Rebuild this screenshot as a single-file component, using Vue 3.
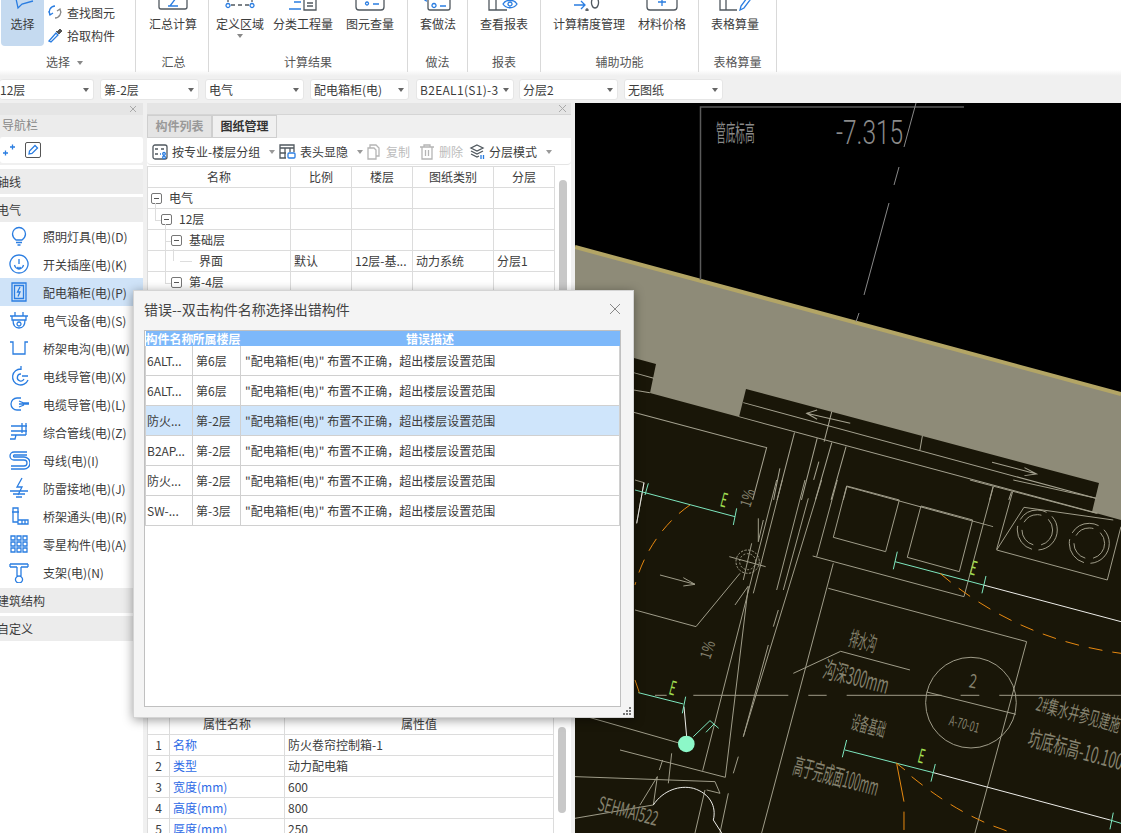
<template>
  <div class="app">
    <!-- ribbon -->
    <div class="ribbon">
      <div class="group" style="width: 136px">
        <div class="btns">
          <div class="select-btn">
            <svg class="clip-icon" width="26" height="10" viewBox="0 0 26 10"><path d="M5 -6 L8 8 L12 4 L23 1" class="ic-blue" /></svg>
            <span>选择</span>
          </div>
          <div class="side-btns">
            <div class="side-btn">
              <svg width="16" height="16" viewBox="0 0 16 16"><path d="M8 2a6 6 0 0 0-5 9" class="ic-blue" /><path d="M2 7l1 4 3-2" class="ic-blue" /><path d="M8 14a6 6 0 0 0 5-9M14 9l-1-4-3 2" class="ic-gray" /></svg>
              <span>查找图元</span>
            </div>
            <div class="side-btn">
              <svg width="16" height="16" viewBox="0 0 16 16"><path d="M2 14l7-8 2 2-7 7z" class="ic-blue" /><path d="M9 4l3 3M10 5l3-3 2 2-3 3z" fill="#555" stroke="#555" /></svg>
              <span>拾取构件</span>
            </div>
          </div>
        </div>
        <div class="group-label first-label">选择<i class="tri lbl-tri"></i></div>
      </div>
      <div v-for="g in ribbonGroups" :key="g.label" class="group" :style="{ width: g.width + 'px' }">
        <div class="btns" :style="{ paddingLeft: g.pad + 'px' }">
          <div v-for="b in g.btns" :key="b.label" class="big-btn" :style="{ width: b.w + 'px', marginRight: b.gap + 'px' }">
            <svg class="clip-icon" width="34" height="11" viewBox="0 0 34 11">
              <path v-for="p in b.gray" :key="p" :d="p" class="ic-dark" />
              <path v-for="p in b.blue" :key="p" :d="p" class="ic-blue" />
            </svg>
            <span>{{ b.label }}</span>
            <i v-if="b.more" class="tri more-tri"></i>
          </div>
        </div>
        <div class="group-label">{{ g.label }}</div>
      </div>
    </div>

    <!-- combo row -->
    <div class="combo-row">
      <div v-for="(c, i) in combos" :key="c" class="combo" :class="{ first: i === 0 }">
        <span>{{ c }}</span><i class="tri"></i>
      </div>
    </div>

    <div class="body">
      <!-- navigation -->
      <div class="nav">
        <div class="nav-close"><svg width="8" height="8" viewBox="0 0 8 8"><path d="M1 1l6 6M7 1L1 7" stroke="#aaa" fill="none" /></svg></div>
        <div class="nav-title">导航栏</div>
        <div class="nav-tools">
          <svg width="14" height="14" viewBox="0 0 14 14"><path d="M1 10h5M3.500 7.500v5M8 4h5M10.500 1.500v5" class="ic-blue" /></svg>
          <span class="pen-box"><svg width="12" height="12" viewBox="0 0 12 12"><path d="M2 10l.5-3L8 1.500 10.500 4 5 9.500z" class="ic-blue" /></svg></span>
        </div>
        <div class="nav-list">
          <div class="nav-head">轴线</div>
          <div class="nav-head">电气</div>
          <div v-for="(item, i) in navItems" :key="item.label" class="nav-item" :class="{ on: i === 2 }">
            <svg width="22" height="22" viewBox="0 0 22 22">
              <path v-for="p in item.paths" :key="p" :d="p" class="ic-blue" />
            </svg>
            <span>{{ item.label }}</span>
          </div>
          <div class="nav-head after">建筑结构</div>
          <div class="nav-head">自定义</div>
        </div>
      </div>

      <!-- drawing panel -->
      <div class="panel">
        <div class="panel-close"><svg width="9" height="9" viewBox="0 0 9 9"><path d="M1 1l7 7M8 1L1 8" stroke="#aaa" fill="none" /></svg></div>
        <div class="tabs">
          <div class="tab">构件列表</div>
          <div class="tab active">图纸管理</div>
        </div>
        <div class="tools">
          <div class="tool" style="width: 127px">
            <svg width="16" height="16" viewBox="0 0 16 16"><rect x="1" y="1" width="14" height="14" rx="2" class="ic-dark" /><path d="M3 5h3M9 5h3M3 10h3" class="ic-dark" /><path d="M8 10h1M12 8.500a1.300 1.300 0 1 0 .01 0M12 12a1.300 1.300 0 1 0 .01 0" class="ic-blue" /></svg>
            <span>按专业-楼层分组</span><i class="tri"></i>
          </div>
          <div class="tool" style="width: 87px">
            <svg width="17" height="17" viewBox="0 0 17 17"><path d="M1 2h14v3H1zM1 5v10h6M6 5v10M1 10h6M11 5v4M15 5v4" class="ic-dark" /><rect x="9" y="10" width="7" height="5" rx="1" class="ic-blue" /></svg>
            <span>表头显隐</span><i class="tri"></i>
          </div>
          <div class="tool off" style="width: 53px">
            <svg width="16" height="16" viewBox="0 0 16 16"><path d="M4 4V1h6l3 3v8h-3M2 4h6l2 2v9H2z" class="ic-off" /></svg>
            <span>复制</span>
          </div>
          <div class="tool off" style="width: 50px">
            <svg width="16" height="16" viewBox="0 0 16 16"><path d="M1 3h14M5 3V1h6v2M3 3v12h10V3M6.500 6v6M9.500 6v6" class="ic-off" /></svg>
            <span>删除</span>
          </div>
          <div class="tool">
            <svg width="16" height="16" viewBox="0 0 16 16"><path d="M8 1l6 3-6 3-6-3zM2 7l6 3 6-3M2 10l6 3 2-1" class="ic-dark" /><path d="M12 11v4M14.500 11v4" class="ic-blue" /></svg>
            <span>分层模式</span><i class="tri"></i>
          </div>
        </div>
        <div class="grid-wrap">
          <table class="grid">
            <colgroup><col style="width: 143px" /><col style="width: 61px" /><col style="width: 61px" /><col style="width: 81px" /><col style="width: 61px" /></colgroup>
            <thead>
              <tr><th>名称</th><th>比例</th><th>楼层</th><th>图纸类别</th><th>分层</th></tr>
            </thead>
            <tbody>
              <tr v-for="r in drawingRows" :key="r.name">
                <td class="tree-cell">
                  <div class="tree" :style="{ paddingLeft: r.indent + 'px' }">
                    <span v-if="r.box" class="box"></span>
                    <span v-else class="leaf"></span>
                    <span>{{ r.name }}</span>
                  </div>
                </td>
                <td>{{ r.scale }}</td><td>{{ r.floor }}</td><td>{{ r.kind }}</td><td>{{ r.layer }}</td>
              </tr>
            </tbody>
          </table>
          <div class="track"><div class="thumb"></div></div>
        </div>
        <div class="props">
          <table class="grid">
            <colgroup><col style="width: 22px" /><col style="width: 115px" /><col style="width: 269px" /></colgroup>
            <thead><tr class="prop-head"><th></th><th>属性名称</th><th>属性值</th></tr></thead>
            <tbody>
              <tr v-for="(p, i) in props" :key="p[0]">
                <td class="num">{{ i + 1 }}</td><td class="key">{{ p[0] }}</td><td>{{ p[1] }}</td>
              </tr>
            </tbody>
          </table>
          <div class="track prop-track"><div class="thumb"></div></div>
        </div>
      </div>

      <!-- CAD canvas -->
      <svg class="cad" width="546" height="730" viewBox="575 103 546 730">
        <rect x="575" y="103" width="546" height="730" fill="#000" />
        <path d="M575 247L1121 394V833H575z" fill="#8e8b78" />
        <path d="M575 247L1121 394" stroke="#b3a565" stroke-width="4" fill="none" />
        <path d="M575 342L656 364L650 393L739 417L746 389L1099 483L1092 512L1121 520V833H575z" fill="#191608" />
        <path d="M700.500 280V107H964" stroke="#5a5a5a" stroke-width="1.500" fill="none" />
        <path d="M916 103L904 147M899 167L894 185M889 203L864 295M859 313L856 322" stroke="#888" fill="none" />
        <text class="cad-text" transform="translate(716 141) scale(.42 1)" font-size="23" fill="#8a8a8a">管底标高</text>
        <text class="cad-num" transform="translate(836 144) scale(.72 1)" font-size="34" fill="#8a8a8a">-7.315</text>

        <g transform="translate(575 100) scale(.3484 .3333)" fill="none" stroke="#a5a290" stroke-width="3">
          <path :d="upperLines" />
        </g>
        <g transform="translate(620 480) scale(.3333)" fill="none" stroke-width="3">
          <path :d="wallLines" stroke="#a09d8a" />
          <path :d="whiteLines" stroke="#eeeeea" />
          <path :d="tealLines" stroke="#7de8c0" />
          <path :d="orangeLines" stroke="#e88a10" stroke-dasharray="42 30" />
          <path d="M45 600L58 638M830 850L852 965M852 995V1050M830 850L855 870" stroke="#e88a10" />
          <circle cx="383" cy="245" r="35" stroke="#a09d8a" stroke-dasharray="7 4" />
          <circle cx="383" cy="245" r="24" stroke="#a09d8a" stroke-dasharray="6 5" />
          <circle cx="1252" cy="150" r="60" stroke="#a09d8a" stroke-dasharray="90 20" />
          <circle cx="1252" cy="150" r="46" stroke="#a09d8a" stroke-dasharray="60 24" />
          <circle cx="1408" cy="190" r="60" stroke="#a09d8a" stroke-dasharray="90 20" />
          <circle cx="1408" cy="190" r="46" stroke="#a09d8a" stroke-dasharray="60 24" />
          <circle cx="1053" cy="668" r="136" stroke="#a09d8a" />
          <circle cx="199" cy="792" r="25" fill="#8cf8c8" />
          <g class="cad-text" fill="#85826f" stroke="none">
            <text transform="translate(683 495) rotate(15) scale(.45 1)" font-size="62">排水沟</text>
            <text transform="translate(605 590) rotate(15) scale(.52 1)" font-size="70">沟深300mm</text>
            <text transform="translate(690 745) rotate(15) scale(.45 1)" font-size="58">设备基础</text>
            <text transform="translate(515 880) rotate(15) scale(.44 1)" font-size="70">高于完成面100mm</text>
            <text transform="translate(1245 690) rotate(15) scale(.55 1)" font-size="58">2#集水井参见建施</text>
            <text transform="translate(1220 795) rotate(15) scale(.6 1)" font-size="66">坑底标高-10.100</text>
            <text transform="translate(1045 622) rotate(10) scale(.7 1)" font-size="58">2</text>
            <text transform="translate(985 735) rotate(15) scale(.62 1)" font-size="42">A-70-01</text>
            <text transform="translate(270 540) rotate(-72) scale(.8 1)" font-size="46">1%</text>
            <text transform="translate(390 85) rotate(-72) scale(.8 1)" font-size="46">1%</text>
            <text transform="translate(-70 990) rotate(15) scale(.58 1)" font-size="60">SEHMAI522</text>
          </g>
          <g class="cad-text" fill="#9fdc50" stroke="none" font-size="58">
            <text transform="translate(298 78) rotate(15) scale(.55 1)">E</text>
            <text transform="translate(144 642) rotate(15) scale(.55 1)">E</text>
            <text transform="translate(1046 282) rotate(15) scale(.55 1)">E</text>
            <text transform="translate(890 846) rotate(15) scale(.55 1)">E</text>
          </g>
        </g>
      </svg>
    </div>

    <!-- error dialog -->
    <div class="dialog">
      <div class="dialog-title">
        <span>错误--双击构件名称选择出错构件</span>
        <svg width="12" height="12" viewBox="0 0 12 12"><path d="M1 1l10 10M11 1L1 11" stroke="#888" fill="none" /></svg>
      </div>
      <div class="err-box">
        <table class="err">
          <colgroup><col style="width: 47px" /><col style="width: 48px" /><col /></colgroup>
          <thead><tr><th>构件名称</th><th>所属楼层</th><th>错误描述</th></tr></thead>
          <tbody>
            <tr v-for="(e, i) in errors" :key="i" :class="{ sel: i === 2 }">
              <td>{{ e[0] }}</td><td>{{ e[1] }}</td><td>"配电箱柜(电)" 布置不正确，超出楼层设置范围</td>
            </tr>
          </tbody>
        </table>
      </div>
      <svg class="grip" width="9" height="9" viewBox="0 0 9 9"><path d="M7 1h2v2H7zM4 4h2v2H4zM7 4h2v2H7zM1 7h2v2H1zM4 7h2v2H4zM7 7h2v2H7z" fill="#777" /></svg>
    </div>
  </div>
</template>

<script setup>
const ribbonGroups = [
  { label: '汇总', width: 73, pad: 12, btns: [
    { label: '汇总计算', w: 50, gray: ['M3 -4V7a2 2 0 0 0 2 2h24a2 2 0 0 0 2-2V-4'], blue: ['M12 6h10M20 -2L14 6'] }
  ] },
  { label: '计算结果', width: 199, pad: 7, btns: [
    { label: '定义区域', w: 48, gap: 9, more: true, gray: ['M8 5h4M15 5h4M22 5h4M5 -3v5M29 -3v5'], blue: ['M5 3.500a2 2 0 1 0 .01 0M29 3.500a2 2 0 1 0 .01 0'] },
    { label: '分类工程量', w: 60, gap: 13, gray: ['M18 -3h12V10H18zM21 3h6M21 6h6'], blue: ['M3 9h12M8 2h7'] },
    { label: '图元查量', w: 48, gray: ['M3 -3V7a3 3 0 0 0 3 3h22a3 3 0 0 0 3-3V-3'], blue: ['M14 2a1.500 1.500 0 1 0 .01 0M20 4h6'] }
  ] },
  { label: '做法', width: 60, pad: 11, btns: [
    { label: '套做法', w: 38, gray: ['M7 -2V8a2 2 0 0 0 2 2h18a2 2 0 0 0 2-2V-2'], blue: ['M13 3.500a2 2 0 1 0 .01 0M19 6h6M3 -2a3 3 0 0 0 3 3'] }
  ] },
  { label: '报表', width: 73, pad: 12, btns: [
    { label: '查看报表', w: 48, gray: ['M2 -3V10H20M9 -3V10'], blue: ['M16 4c3-5 11-5 14 0-3 5-11 5-14 0zM23 2a2 2 0 1 0 .01 0'] }
  ] },
  { label: '辅助功能', width: 158, pad: 12, btns: [
    { label: '计算精度管理', w: 72, gap: 13, blue: ['M2 5h11M9 1l4 4-4 4'], gray: ['M15 9a1 1 0 1 0 .01 0M23 -3a3.500 5.500 0 1 0 .01 0'] },
    { label: '材料价格', w: 48, gray: ['M2 -3V7a3 3 0 0 0 3 3h24a3 3 0 0 0 3-3V-3'], blue: ['M17 -2V6M13 2h8'] }
  ] },
  { label: '表格算量', width: 78, pad: 12, btns: [
    { label: '表格算量', w: 48, gray: ['M2 -3V10H19M8 -3V10'], blue: ['M22 10l1-4 6-8 3 2-6 8z'] }
  ] }
]

const combos = ['12层', '第-2层', '电气', '配电箱柜(电)', 'B2EAL1(S1)-3', '分层2', '无图纸']

const navItems = [
  { label: '照明灯具(电)(D)', paths: ['M8 15C5.500 13 4.500 11 4.500 9a6.500 6.500 0 0 1 13 0c0 2-1 4-3.500 6zM8 17.500h6M9.500 20h3'] },
  { label: '开关插座(电)(K)', paths: ['M11 2a9 9 0 1 0 .01 0M11 6v5M6.500 12c.5 2 2.500 4 4.500 4s4-2 4.500-4M9.500 14l1.500 2 1.500-2'] },
  { label: '配电箱柜(电)(P)', paths: ['M4 2h14v18H4zM6.500 4.500h9v13h-9zM12 6l-2.500 5H12l-2 4.500'] },
  { label: '电气设备(电)(S)', paths: ['M2 7h18M4 7v4h14V7M5 11c0 6 3 8 6 8s6-2 6-8M7 7V3M15 7V3M11 13a2 2 0 1 0 .01 0'] },
  { label: '桥架电沟(电)(W)', paths: ['M2 5h3v12h12V5h3M5 17h12'] },
  { label: '电线导管(电)(X)', paths: ['M13 4a8 8 0 1 0 7 11M13 9a3.500 3.500 0 1 0 3 5M20 11h-6M13 1v4'] },
  { label: '电缆导管(电)(L)', paths: ['M13 5H9a6 6 0 1 0 0 12h4M11 8l5 2h5M11 11h10M11 14l5-2'] },
  { label: '综合管线(电)(Z)', paths: ['M3 5h16M3 10h16M14 2v10M18 2v12M2 18h5l1-4h10M3 14h5'] },
  { label: '母线(电)(I)', paths: ['M19 3H6a4 4 0 0 0 0 8h10a3 3 0 0 1 0 6H3M19 6H6a1.200 1.200 0 0 0 0 2h10a6 6 0 0 1 0 12H3'] },
  { label: '防雷接地(电)(J)', paths: ['M14 1l-5 9h5l-4 8M2 14h18M5 17h12M8 20h6'] },
  { label: '桥架通头(电)(R)', paths: ['M5 3h5v14H5zM4 7h7M10 15h10v4H10zM14 15v4M17 15v4'] },
  { label: '零星构件(电)(A)', paths: ['M3 3h4v4H3zM9 3h4v4H9zM15 3h4v4h-4zM3 9h4v4H3zM9 9h4v4H9zM15 9h4v4h-4zM3 15h4v4H3zM9 15h4v4H9zM15 15h4v4h-4z'] },
  { label: '支架(电)(N)', paths: ['M2 3h18M2 3v3M20 3v3M2 6h7M20 6h-7M9 6v9M13 6v9M11 15a3.500 3.500 0 1 0 .01 0'] }
]

const drawingRows = [
  { name: '电气', indent: 3, box: true },
  { name: '12层', indent: 13, box: true },
  { name: '基础层', indent: 23, box: true },
  { name: '界面', indent: 33, scale: '默认', floor: '12层-基...', kind: '动力系统', layer: '分层1' },
  { name: '第-4层', indent: 23, box: true }
]

const props = [
  ['名称', '防火卷帘控制箱-1'],
  ['类型', '动力配电箱'],
  ['宽度(mm)', '600'],
  ['高度(mm)', '800'],
  ['厚度(mm)', '250']
]

const errors = [
  ['6ALT...', '第6层'],
  ['6ALT...', '第6层'],
  ['防火...', '第-2层'],
  ['B2AP...', '第-2层'],
  ['防火...', '第-2层'],
  ['SW-...', '第-3层']
]

const upperLines = [
  'M168 818L226 835M168 870L215 878M168 937L550 1043L510 1200',
  'M483 908L1495 1195M470 950L1500 1240',
  'M790 970L665 940M695 930L665 940L695 958',
  'M1197 1087L1325 1122M1290 1103L1325 1122L1290 1127',
  'M737 935L715 1025M997 1008L990 1050',
  'M630 998L580 1200M695 1015L650 1200M737 1028L690 1200M778 1040L735 1200',
  'M780 1160L1200 1280M780 1160L770 1200M1200 1160L1190 1200M1253 1175L1245 1200',
  'M588 1105L570 1200M700 1085L685 1140'
].join(' ')

const wallLines = [
  // road edges
  'M470 0L248 872M487 0L400 340M555 0L470 330M565 55L490 330M475 390L460 440M445 495L370 770M355 830L340 880',
  'M605 0L370 770M652 0L590 230M640 250L425 1059',
  'M0 810L316 892M-135 700L180 790M316 892L385 320M385 318L345 375',
  'M45 390L228 440L360 280M45 0L72 8L50 130',
  'M120 285L225 313M190 293L225 313L190 318',
  'M415 115L415 185L430 120',
  // rooms and equipment
  'M680 18L838 60L797 215L640 172Z M903 78L1058 120L1018 275L862 232Z',
  'M578 228L1032 350M1120 20L1032 350M1178 35L1130 208',
  'M1212 82L1130 210L1462 300L1503 140M1212 82L1480 120',
  'M1050 0L1430 100M1180 0L1430 55',
  'M625 325L1220 485L1065 1059',
  'M520 580L662 514L870 570M920 636L1188 703',
  // axis
  'M105 646H140M220 646H505M565 646H620M680 646H965M1022 646H1078M1138 646H1503',
  // valve
  'M328 230L437 260M395 190L370 300',
  // bottom left
  'M-135 890L285 905M285 905L300 940M255 930L225 1059M300 940L260 930M325 940L300 1059',
  'M-135 1015L100 975L112 890M112 890L60 975',
  'M155 820L145 910M128 840L118 870'
].join(' ')

const whiteLines = [
  'M1090 315L1503 425M940 878L1470 1020',
  'M192 680L200 770M72 8L50 130',
  'M100 975C130 930 180 915 220 925C270 940 290 980 280 1020L305 1059'
].join(' ')

const tealLines = [
  'M45 30L345 110M85 10L75 45M350 85L340 135',
  'M55 638L190 672M197 650L187 700',
  'M825 245L1090 315M832 215L820 268M1098 288L1086 340',
  'M675 810L940 878M680 780L667 832M946 852L933 905',
  'M1470 1020L1503 1030M1480 998L1470 1048',
  'M220 770L270 722L296 745M258 757L282 732'
].join(' ')

const orangeLines = [
  'M210 75C130 130 70 220 45 315',
  'M960 280C1100 400 1280 490 1503 520',
  'M875 890C950 950 1050 1020 1180 1059'
].join(' ')
</script>

<style scoped>
.app {
  position: relative;
  width: 1121px;
  height: 833px;
  overflow: hidden;
  display: flex;
  flex-direction: column;
  background: #f0f0f0;
  color: #3c3c3c;
  font-family: "Noto Sans CJK SC", "Noto Sans", sans-serif;
  font-size: 12px;
}
svg { display: block; flex: none; }
.ic-blue, .ic-dark, .ic-off, .ic-gray { fill: none; stroke-width: 1.3; }
.ic-blue { stroke: #2a7de1; }
.ic-dark { stroke: #50585f; }
.ic-gray { stroke: #888; }
.ic-off { stroke: #b5b5b5; }

.tri {
  display: inline-block;
  width: 0;
  height: 0;
  border-left: 3.500px solid transparent;
  border-right: 3.500px solid transparent;
  border-top: 4px solid #666;
}

/* ribbon */
.ribbon {
  height: 76px;
  flex: none;
  display: flex;
  background: linear-gradient(#fff 70px, #f0f0f0 76px);
}
.group {
  height: 72px;
  flex: none;
  box-sizing: border-box;
  border-right: 1px solid #d9d9d9;
  display: flex;
  flex-direction: column;
}
.group:nth-child(2) .group-label { padding-left: 3px; }
.btns { display: flex; height: 53px; box-sizing: border-box; }
.group-label { text-align: center; line-height: 18px; color: #555; }
.first-label { padding-right: 6px; }
.lbl-tri { margin-left: 7px; vertical-align: 2px; border-top-color: #888; }
.select-btn {
  width: 43px;
  height: 46px;
  margin-left: 1px;
  background: #c5daf0;
  border-radius: 0 0 4px 4px;
  display: flex;
  flex-direction: column;
  align-items: center;
}
.select-btn span { line-height: 18px; margin-top: 5px; }
.side-btns { margin-left: 3px; padding-top: 3px; display: flex; flex-direction: column; gap: 5px; }
.side-btn { display: flex; align-items: center; gap: 4px; height: 18px; }
.big-btn { display: flex; flex-direction: column; align-items: center; flex: none; white-space: nowrap; }
.big-btn span { line-height: 18px; margin-top: 4px; }
.more-tri { margin-top: 1px; border-top-color: #888; }

/* combos */
.combo-row {
  height: 27px;
  flex: none;
  box-sizing: border-box;
  padding-top: 3px;
  display: flex;
  gap: 6px;
  background: #f0f0f0;
}
.combo {
  width: 99px;
  height: 21px;
  box-sizing: border-box;
  padding: 0 4px 0 3px;
  display: flex;
  align-items: center;
  justify-content: space-between;
  background: #fff;
  border-radius: 3px;
  border: 1px solid #e6e6e6;
}
.combo.first { width: 94px; padding-left: 0; border-left: none; }
.combo:nth-child(5) { margin-left: 1px; width: 98px; letter-spacing: .3px; }
.combo:nth-child(6) { margin-left: -1px; }

.body { flex: 1; display: flex; min-height: 0; }

/* navigation */
.nav { width: 143px; flex: none; display: flex; flex-direction: column; }
.nav-close {
  height: 12px;
  background: #e5e5e5;
  display: flex;
  justify-content: flex-end;
  align-items: center;
  padding-right: 6px;
}
.nav-title { height: 22px; line-height: 20px; padding-left: 2px; color: #888; background: #ececec; }
.nav-tools {
  height: 26px;
  background: #fff;
  display: flex;
  align-items: center;
  gap: 9px;
  padding-left: 2px;
  border-radius: 3px;
  box-sizing: border-box;
}
.pen-box {
  width: 14px;
  height: 14px;
  border: 1px solid #555;
  border-radius: 2px;
  display: flex;
  align-items: center;
  justify-content: center;
}
.nav-list { flex: 1; margin-top: 2px; padding-top: 4px; background: #fff; }
.nav-head {
  height: 25px;
  margin-bottom: 3px;
  line-height: 25px;
  text-indent: -3px;
  background: #ececec;
  overflow: hidden;
}
.nav-head + .nav-item { margin-top: -3px; }
.nav-head.after { margin-top: 2px; }
.nav-item {
  height: 28px;
  display: flex;
  align-items: center;
  gap: 13px;
  padding-left: 8px;
  white-space: nowrap;
  margin-top: 0;
}
.nav-item.on { background: #cfe3f8; }

/* panel */
.panel {
  width: 424px;
  margin: 0 4px;
  flex: none;
  display: flex;
  flex-direction: column;
  background: #fff;
}
.panel-close {
  height: 11px;
  background: #e5e5e5;
  border-bottom: 1px solid #d5d5d5;
  display: flex;
  justify-content: flex-end;
  align-items: center;
  padding-right: 4px;
}
.tabs { height: 23px; background: #f0f0f0; display: flex; }
.tab {
  width: 65px;
  box-sizing: border-box;
  line-height: 20px;
  text-align: center;
  font-weight: 700;
  color: #999;
  background: #e4e4e4;
  border: 1px solid #cfcfcf;
}
.tab.active { color: #333; background: #f0f0f0; }
.tools {
  height: 27px;
  box-sizing: border-box;
  padding: 1px 0 0 5px;
  display: flex;
  align-items: center;
  border-bottom: 1px solid #e5e5e5;
  border-radius: 4px;
}
.tool { display: flex; align-items: center; gap: 4px; flex: none; white-space: nowrap; }
.tool .tri { margin-left: 5px; border-top-color: #999; }
.tool.off { color: #bcbcbc; }

.grid-wrap { flex: 1; display: flex; min-height: 0; padding-top: 1px; }
.grid {
  width: 407px;
  height: fit-content;
  table-layout: fixed;
  border-collapse: collapse;
  flex: none;
}
.grid th, .grid td {
  height: 20px;
  padding: 0 3px;
  border: 1px solid #dcdcdc;
  font-weight: 400;
  white-space: nowrap;
  overflow: hidden;
  line-height: 20px;
}
.grid th { text-align: center; }
.grid td.tree-cell { padding: 0; overflow: visible; }
.tree { display: flex; align-items: center; gap: 7px; height: 20px; }
.box {
  position: relative;
  width: 11px;
  height: 11px;
  box-sizing: border-box;
  border: 1px solid #777;
  border-radius: 2px;
  background: #fff;
}
.box::after {
  content: "";
  position: absolute;
  left: 2px;
  top: 4px;
  width: 5px;
  height: 1px;
  background: #555;
}
/* tree connector drawn from the parent row */
.box::before, .leaf::before {
  content: "";
  position: absolute;
  left: -7px;
  top: -12px;
  width: 5px;
  height: 17px;
  border-left: 1px solid #ddd;
  border-bottom: 1px solid #ddd;
}
tr:first-child .box::before { display: none; }
tr:nth-child(5) .box::before { top: -54px; height: 59px; }
.leaf { position: relative; width: 12px; height: 1px; margin-left: -1px; background: #ddd; }
.leaf::before { left: -7px; top: -12px; height: 12px; width: 6px; border-bottom: none; }
.track { width: 14px; flex: none; padding: 14px 4px 0; box-sizing: border-box; }
.thumb { width: 8px; height: 360px; border-radius: 4px; background: #c8c8c8; }
.props { height: 120px; flex: none; display: flex; overflow: hidden; }
.prop-track { padding-top: 14px; }
.prop-track .thumb { height: 86px; }
.num { text-align: center; }
.key { color: #2e6be6; }

/* CAD */
.cad { flex: none; }
.cad-text { font-family: "Noto Sans CJK SC", sans-serif; }
.cad-num { font-family: Roboto, sans-serif; font-weight: 300; }

/* dialog */
.dialog {
  position: absolute;
  left: 133px;
  top: 290px;
  width: 501px;
  height: 428px;
  box-sizing: border-box;
  background: #f4f4f4;
  border: 1px solid #d4d4d4;
  box-shadow: 0 2px 10px rgba(0, 0, 0, .4);
}
.dialog-title {
  height: 39px;
  display: flex;
  align-items: center;
  justify-content: space-between;
  padding: 0 12px 3px 10px;
  box-sizing: border-box;
  font-size: 14px;
  color: #444;
}
.err-box {
  width: 477px;
  height: 377px;
  margin-left: 10px;
  box-sizing: border-box;
  background: #fff;
  border: 1px solid #c0c0c0;
}
.err { width: 100%; table-layout: fixed; border-collapse: collapse; }
.err th {
  height: 15px;
  padding: 0;
  line-height: 15px;
  color: #fff;
  font-weight: 700;
  background: #7db8fa;
  white-space: nowrap;
  overflow: hidden;
}
.err td {
  height: 29px;
  padding: 0 0 0 1px;
  border: 1px solid #d0d0d0;
  border-top: none;
  white-space: nowrap;
  overflow: hidden;
}
.err td:nth-child(2) { padding-left: 3px; }
.err td:last-child { padding-left: 4px; }
.err tr.sel td { background: #cfe5fb; }
.grip { position: absolute; right: 2px; bottom: 2px; }
</style>

<style>
html, body { margin: 0; overflow: hidden; }
</style>
